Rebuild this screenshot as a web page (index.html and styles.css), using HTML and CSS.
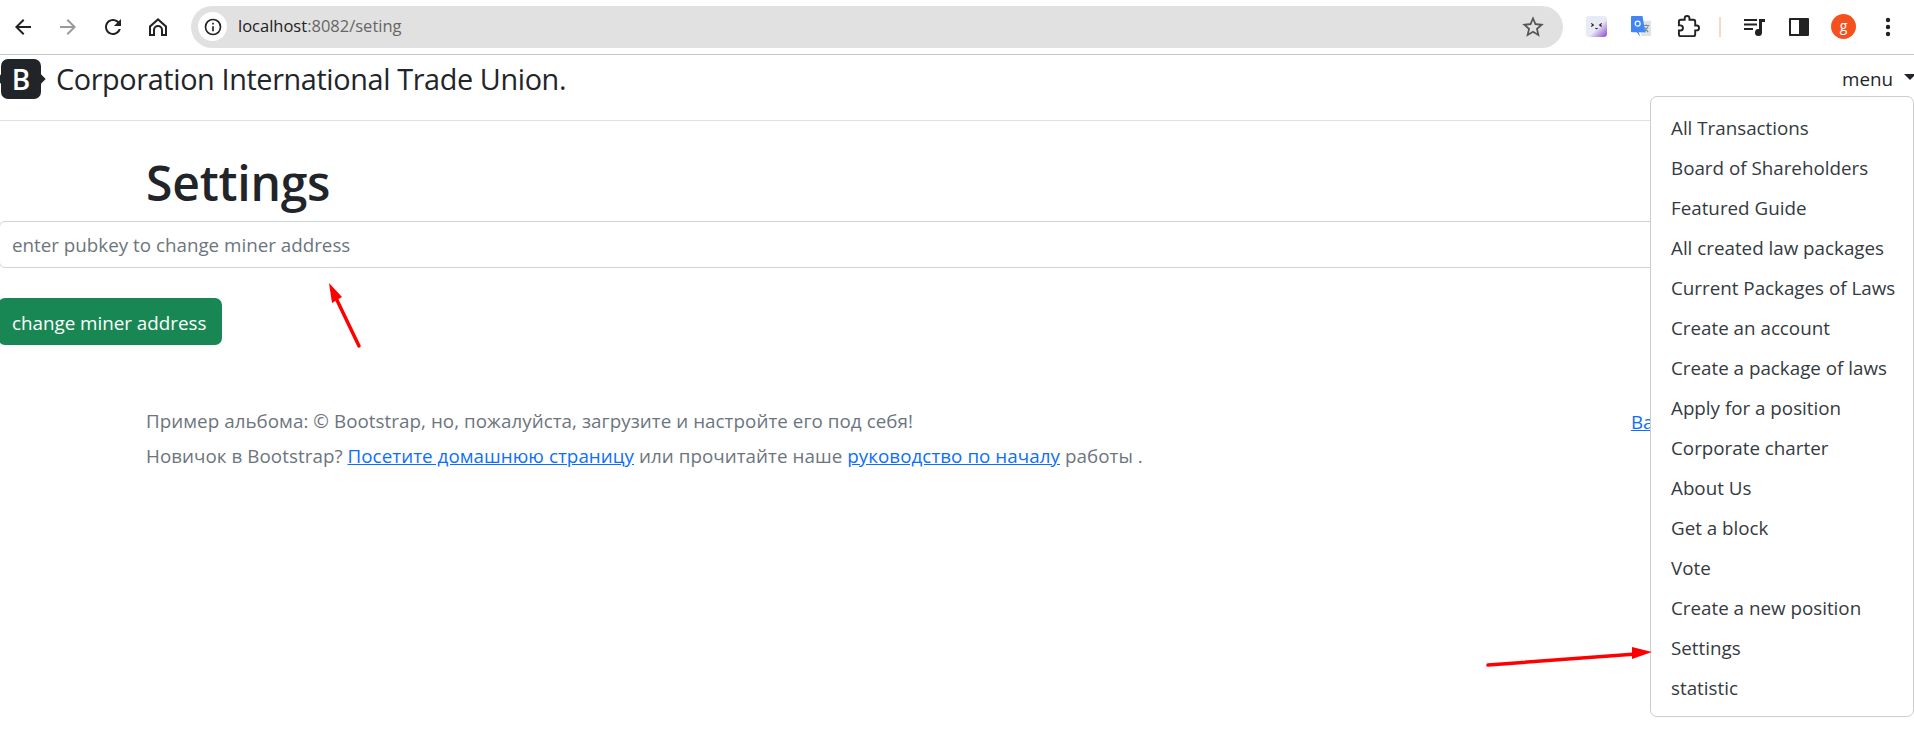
FILE: index.html

```html
<!DOCTYPE html>
<html lang="en">
<head>
  <meta charset="UTF-8">
  <title>Settings</title>
  <meta name="viewport" content="width=device-width, initial-scale=1.0">
  <link rel="stylesheet" href="styles.css">
</head>
<body>
  <div class="toolbar">
    <div class="nav-icons">
      <svg class="tool" viewBox="0 0 24 24"><path d="M20 11H7.83l5.59-5.59L12 4l-8 8 8 8 1.41-1.41L7.83 13H20v-2z"/></svg>
      <svg class="tool off" viewBox="0 0 24 24"><path d="M12 4l-1.41 1.41L16.17 11H4v2h12.17l-5.58 5.59L12 20l8-8z"/></svg>
      <svg class="tool" viewBox="0 0 24 24"><path d="M17.65 6.35C16.2 4.9 14.21 4 12 4c-4.42 0-7.99 3.58-7.99 8s3.57 8 7.99 8c3.73 0 6.84-2.55 7.73-6h-2.08c-.82 2.33-3.04 4-5.65 4-3.31 0-6-2.69-6-6s2.69-6 6-6c1.66 0 3.14.69 4.22 1.78L13 11h7V4l-2.35 2.35z"/></svg>
      <svg class="tool" viewBox="0 0 24 24"><path d="M12 3L3 11v10h6v-6a3 3 0 0 1 6 0v6h6V11L12 3zm7 16h-2v-4a5 5 0 0 0-10 0v4H5v-7.1l7-6.2 7 6.2V19z"/></svg>
    </div>
    <div class="omnibox">
      <span class="site-info">
        <svg viewBox="0 0 24 24"><path d="M12 2a10 10 0 1 0 0 20 10 10 0 0 0 0-20zm0 18a8 8 0 1 1 0-16 8 8 0 0 1 0 16z"/><path d="M11 11h2v6h-2zM11 7h2v2h-2z"/></svg>
      </span>
      <span class="url"><b>localhost</b>:8082/seting</span>
      <svg class="star" viewBox="0 0 24 24"><path d="M22 9.24l-7.19-.62L12 2 9.19 8.63 2 9.24l5.46 4.73L5.82 21 12 17.27 18.18 21l-1.63-7.03L22 9.24zM12 15.4l-3.76 2.27 1-4.28-3.32-2.88 4.38-.38L12 6.1l1.71 4.04 4.38.38-3.32 2.88 1 4.28L12 15.4z"/></svg>
    </div>
    <div class="ext-icons">
      <svg class="ext ext-face" viewBox="0 0 20 20">
        <defs><linearGradient id="faceBg" x1="0" y1="0" x2="1" y2="1"><stop offset="0.55" stop-color="#e8eaf6"/><stop offset="1" stop-color="#8e44c9"/></linearGradient></defs>
        <rect width="20" height="20" rx="3" fill="url(#faceBg)"/>
        <path d="M5 7l2 1.5L5 10M15 7l-2 1.5 2 1.5M9 11.5q1 1 2 0" fill="none" stroke="#222" stroke-width="1.1"/>
      </svg>
      <svg class="ext ext-translate" viewBox="0 0 22 22">
        <path d="M9 5h12v16H11z" fill="#dfe3e6"/>
        <path d="M13 10h6M16 9v1M14 17l4-6M14 12l4 5" fill="none" stroke="#6c8a9a" stroke-width="1.2"/>
        <path d="M1 0h11l3 17H8l2 5-4-5H1a1 1 0 0 1-1-1V1a1 1 0 0 1 1-1z" fill="#4285f4"/>
        <circle cx="7" cy="8" r="2.6" fill="none" stroke="#fff" stroke-width="1.2"/>
      </svg>
      <svg class="ext ext-puzzle" viewBox="0 0 24 24"><path d="M20.5 11H19V7c0-1.1-.9-2-2-2h-4V3.5C13 2.12 11.88 1 10.5 1S8 2.12 8 3.5V5H4c-1.1 0-2 .9-2 2v3.8h1.5c1.49 0 2.7 1.21 2.7 2.7s-1.21 2.7-2.7 2.7H2V20c0 1.1.9 2 2 2h13c1.1 0 2-.9 2-2v-4h1.5c1.38 0 2.5-1.12 2.5-2.5S21.88 11 20.5 11z"/></svg>
      <span class="sep"></span>
      <svg class="tool music" viewBox="0 0 24 24"><path d="M2 4h13v2H2zM2 8.5h13v2H2zM2 13h9v2H2zM17 4h6v3h-3v10.5a3.5 3.5 0 1 1-3-3.46z"/></svg>
      <svg class="tool panel" viewBox="0 0 24 24"><path d="M3 3h18a1 1 0 0 1 1 1v16a1 1 0 0 1-1 1H3a1 1 0 0 1-1-1V4a1 1 0 0 1 1-1zm1 2v14h8V5z"/></svg>
      <span class="avatar">g</span>
      <svg class="tool dots" viewBox="0 0 24 24"><circle cx="12" cy="5" r="2.2"/><circle cx="12" cy="12" r="2.2"/><circle cx="12" cy="19" r="2.2"/></svg>
    </div>
  </div>

  <header class="navbar">
    <a class="brand" href="#">
      <span class="logo">B</span>
      <span class="brand-name">Corporation International Trade Union.</span>
    </a>
    <a class="menu-toggle" href="#">menu<span class="caret"></span></a>
    <ul class="dropdown">
      <li>All Transactions</li>
      <li>Board of Shareholders</li>
      <li>Featured Guide</li>
      <li>All created law packages</li>
      <li>Current Packages of Laws</li>
      <li>Create an account</li>
      <li>Create a package of laws</li>
      <li>Apply for a position</li>
      <li>Corporate charter</li>
      <li>About Us</li>
      <li>Get a block</li>
      <li>Vote</li>
      <li>Create a new position</li>
      <li>Settings</li>
      <li>statistic</li>
    </ul>
  </header>

  <main>
    <h1 class="page-title">Settings</h1>
    <input class="form-control" type="text" placeholder="enter pubkey to change miner address">
    <button class="btn-save">change miner address</button>
  </main>

  <footer class="page-footer">
    <div class="footer-row">
      <p>Пример альбома: © Bootstrap, но, пожалуйста, загрузите и настройте его под себя!</p>
      <a class="back-link" href="#">Back to the top</a>
    </div>
    <p>Новичок в Bootstrap? <a href="#">Посетите домашнюю страницу</a> или прочитайте наше <a href="#">руководство по началу</a> работы .</p>
  </footer>

  <svg class="notes" viewBox="0 0 1914 736">
    <path d="M359 346L335 296" stroke="#f00" stroke-width="3.5" stroke-linecap="round"/>
    <path d="M329 283L342 297L332 303z" fill="#f00"/>
    <path d="M1488 665L1636 654" stroke="#f00" stroke-width="3.5" stroke-linecap="round"/>
    <path d="M1652 652L1632 647L1632 659z" fill="#f00"/>
  </svg>
</body>
</html>
```

FILE: styles.css

```css
* {
  box-sizing: border-box;
}
body {
  margin: 0;
  height: 736px;
  overflow: hidden;
  position: relative;
  background: #fff;
  color: #212529;
  font-family: 'Open Sans', 'Noto Sans', sans-serif;
  font-size: 18.8px;
  line-height: 1.5;
}

/* browser bar */
.toolbar {
  display: flex;
  align-items: center;
  height: 55px;
  border-bottom: 1px solid #c8c8c8;
  padding: 4px 0 5px;
  background: #fff;
}
.nav-icons {
  display: flex;
  flex: none;
  gap: 21px;
  padding-left: 11px;
  width: 191px;
}
.tool {
  width: 24px;
  height: 24px;
  fill: #222;
  flex: none;
}
.tool.off {
  fill: #9a9a9a;
}
.omnibox {
  display: flex;
  flex: none;
  align-items: center;
  width: 1372px;
  height: 42px;
  border-radius: 21px;
  background: #e1e1e1;
  padding: 0 17px 0 7px;
}
.site-info {
  display: flex;
  align-items: center;
  justify-content: center;
  width: 29px;
  height: 29px;
  border-radius: 50%;
  background: #fff;
}
.site-info svg {
  width: 20px;
  height: 20px;
  fill: #222;
}
.url {
  margin-left: 11px;
  flex: 1;
  font-size: 16.5px;
  color: #666;
}
.url b {
  font-weight: 400;
  color: #222;
}
.star {
  width: 26px;
  height: 26px;
  fill: #555;
}
.ext-icons {
  display: flex;
  flex: none;
  align-items: center;
  padding-left: 23px;
}
.ext {
  flex: none;
}
.ext-face {
  width: 21px;
  height: 21px;
  margin-right: 24px;
}
.ext-translate {
  width: 21px;
  height: 21px;
  margin-right: 25px;
}
.ext-puzzle {
  width: 23px;
  height: 23px;
  fill: none;
  stroke: #222;
  stroke-width: 2;
  margin-right: 19px;
}
.sep {
  width: 2px;
  height: 20px;
  background: #f8d9c8;
  margin-right: 21px;
}
.music {
  margin-right: 21px;
}
.panel {
  margin-right: 20px;
}
.avatar {
  flex: none;
  width: 25px;
  height: 25px;
  border-radius: 50%;
  background: #f4511e;
  color: #fff;
  font-size: 14px;
  line-height: 23px;
  text-align: center;
  margin-right: 20px;
}

/* site header */
.navbar {
  display: flex;
  justify-content: space-between;
  align-items: center;
  height: 66px;
  border-bottom: 1px solid #dee2e6;
  padding-left: 1px;
  position: relative;
}
.brand {
  display: flex;
  align-items: center;
  color: #212529;
  text-decoration: none;
  margin-top: -17px;
}
.logo {
  position: relative;
  width: 40px;
  height: 40px;
  border-radius: 7px;
  background: #212529;
  color: #fff;
  font-size: 28px;
  font-weight: 600;
  line-height: 40px;
  text-align: center;
}
.logo::before,
.logo::after {
  content: "";
  position: absolute;
  top: 16px;
  width: 8px;
  height: 8px;
  background: #212529;
  transform: rotate(45deg);
}
.logo::before {
  left: -3px;
}
.logo::after {
  right: -3px;
}
.brand-name {
  margin-left: 15px;
  font-size: 28.8px;
  letter-spacing: -0.37px;
  line-height: 40px;
}
.menu-toggle {
  display: flex;
  align-items: center;
  color: #212529;
  text-decoration: none;
  margin-top: -17px;
}
.caret {
  width: 0;
  height: 0;
  margin-left: 11px;
  margin-top: -5px;
  margin-right: -2px;
  border-top: 6px solid #212529;
  border-left: 6px solid transparent;
  border-right: 6px solid transparent;
}
.dropdown {
  position: absolute;
  top: 41px;
  left: 1650px;
  width: 264px;
  height: 621px;
  margin: 0;
  padding: 11px 0;
  list-style: none;
  background: #fff;
  border: 1px solid #ccc;
  border-radius: 7px;
  z-index: 5;
}
.dropdown li {
  height: 40px;
  line-height: 40px;
  padding-left: 20px;
  color: #343a40;
  white-space: nowrap;
}

/* form */
main {
  padding-top: 25px;
}
.page-title {
  margin: 0 0 0 146px;
  height: 75px;
  font-size: 48px;
  font-weight: 600;
  line-height: 73px;
  letter-spacing: -0.2px;
}
.form-control {
  display: block;
  width: calc(100% + 1px);
  height: 47px;
  margin-left: -1px;
  padding: 1px 12px 0;
  border: 1px solid #ced4da;
  border-radius: 6px;
  font: inherit;
  color: #212529;
  background: #fff;
}
.form-control::placeholder {
  color: #6c757d;
  opacity: 1;
}
.btn-save {
  display: block;
  margin: 30px 0 0 -2px;
  width: 224px;
  height: 47px;
  padding: 3px 0 0 14px;
  border: none;
  border-radius: 7px;
  background: #198754;
  color: #fff;
  font: inherit;
  text-align: left;
}

/* footer */
.page-footer {
  padding: 63px 146px 0;
  color: #6c757d;
  letter-spacing: 0.05px;
}
.page-footer p {
  margin: 0 0 8px;
  line-height: 27px;
}
.page-footer a {
  color: #0d6efd;
}
.footer-row {
  display: flex;
  justify-content: space-between;
}
.back-link {
  margin-right: 4px;
}

/* red arrows drawn on the screenshot */
.notes {
  position: absolute;
  left: 0;
  top: 0;
  width: 1914px;
  height: 736px;
  z-index: 6;
  pointer-events: none;
}
```
